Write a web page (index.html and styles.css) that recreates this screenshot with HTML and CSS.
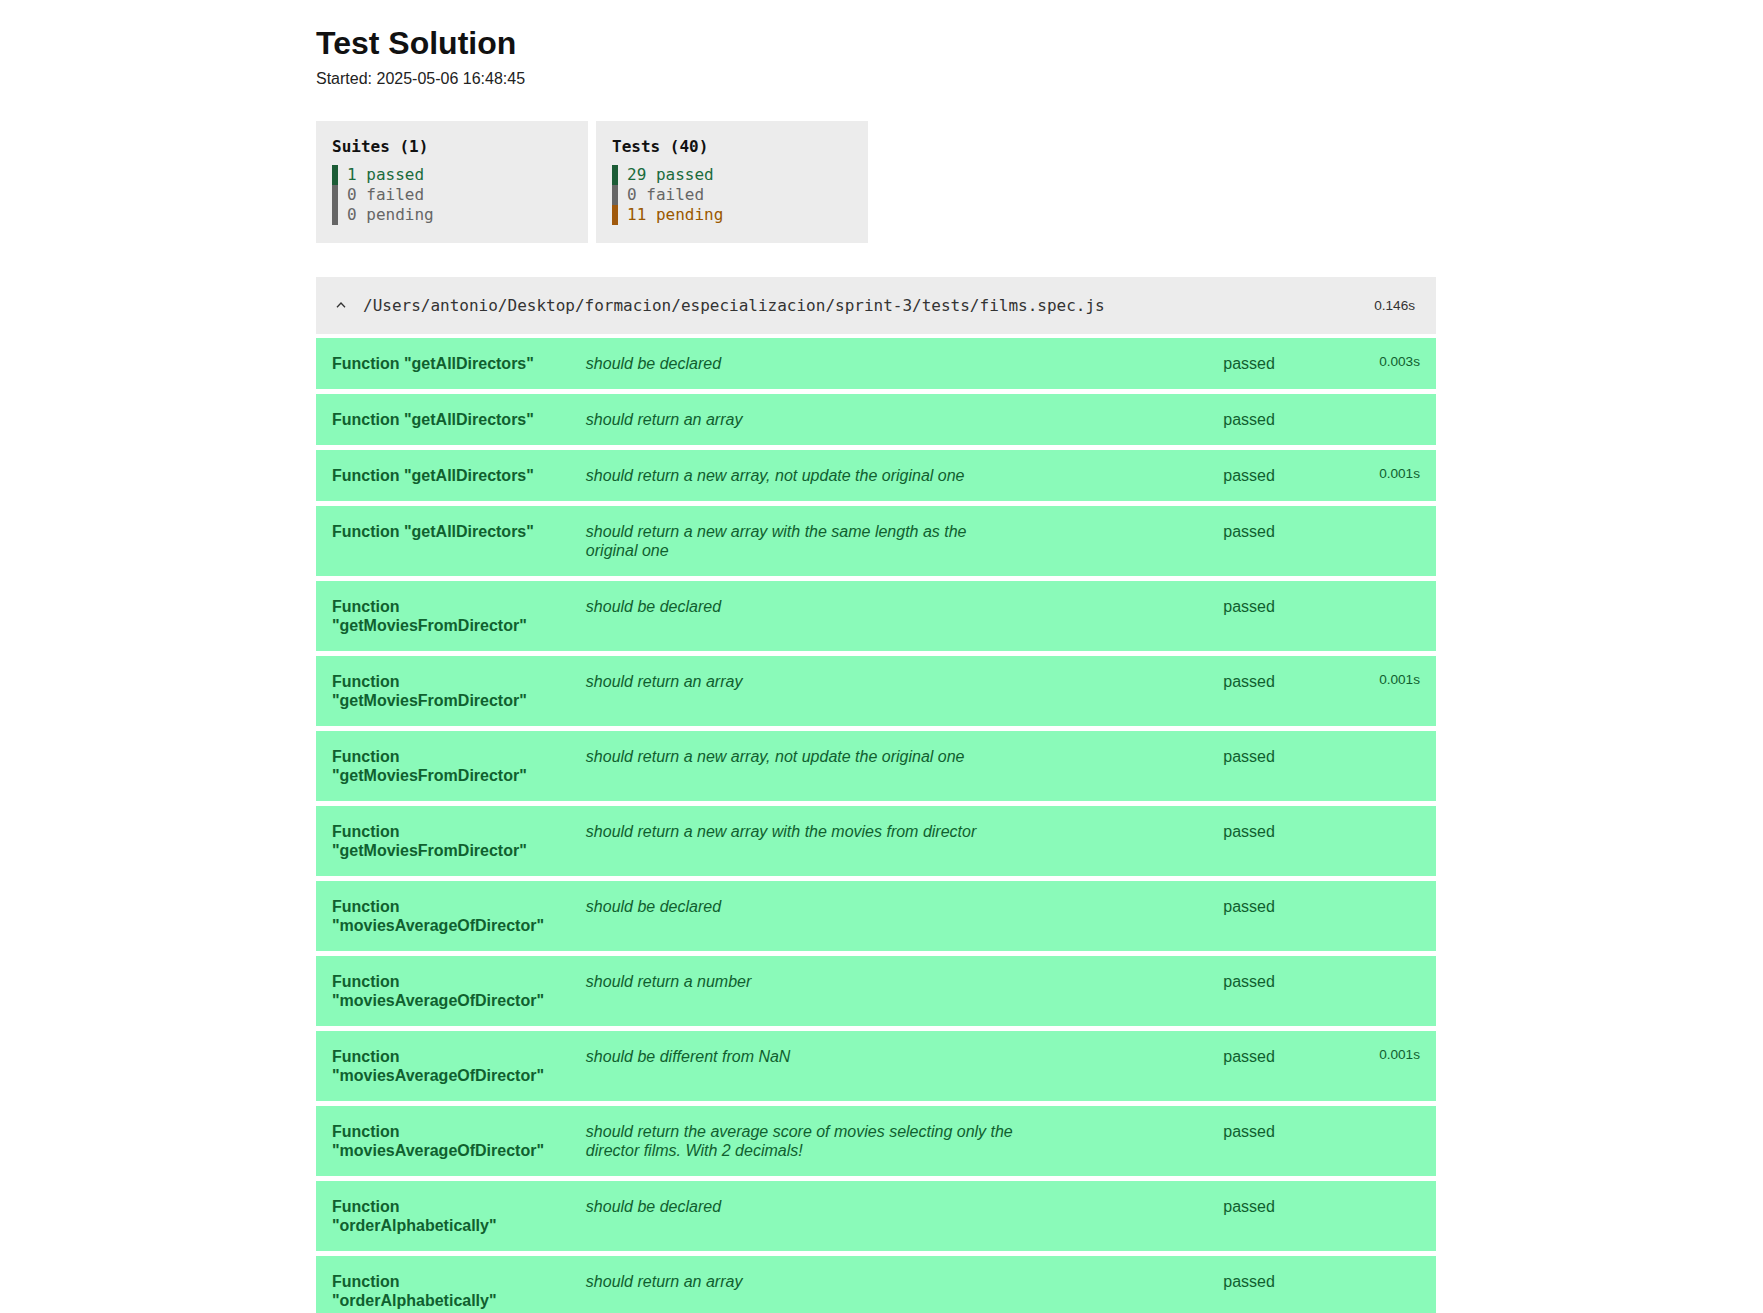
FILE: index.html
```html
<!DOCTYPE html>
<html lang="en">
<head>
<meta charset="utf-8">
<title>Test Solution</title>
<link rel="stylesheet" href="styles.css">
</head>
<body>
<div class="report">
  <header class="report-header">
    <h1 class="title">Test Solution</h1>
    <div class="timestamp">Started: 2025-05-06 16:48:45</div>
  </header>

  <section class="summary">
    <div class="summary-box">
      <div class="summary-total">Suites (1)</div>
      <div class="summary-line passed">1 passed</div>
      <div class="summary-line empty">0 failed</div>
      <div class="summary-line empty">0 pending</div>
    </div>
    <div class="summary-box">
      <div class="summary-total">Tests (40)</div>
      <div class="summary-line passed">29 passed</div>
      <div class="summary-line empty">0 failed</div>
      <div class="summary-line pending">11 pending</div>
    </div>
  </section>

  <section class="suite">
    <div class="suite-info">
      <span class="suite-toggle"><svg width="10" height="6" viewBox="0 0 10 6"><polyline points="1,5.3 5,1 9,5.3" fill="none" stroke="#333" stroke-width="1.3"/></svg></span>
      <span class="suite-path">/Users/antonio/Desktop/formacion/especializacion/sprint-3/tests/films.spec.js</span>
      <span class="suite-time">0.146s</span>
    </div>

    <div class="test-result">
      <div class="test-suitename">Function "getAllDirectors"</div>
      <div class="test-title">should be declared</div>
      <div class="test-status">passed</div>
      <div class="test-duration">0.003s</div>
    </div>
    <div class="test-result">
      <div class="test-suitename">Function "getAllDirectors"</div>
      <div class="test-title">should return an array</div>
      <div class="test-status">passed</div>
      <div class="test-duration"></div>
    </div>
    <div class="test-result">
      <div class="test-suitename">Function "getAllDirectors"</div>
      <div class="test-title">should return a new array, not update the original one</div>
      <div class="test-status">passed</div>
      <div class="test-duration">0.001s</div>
    </div>
    <div class="test-result">
      <div class="test-suitename">Function "getAllDirectors"</div>
      <div class="test-title">should return a new array with the same length as the original one</div>
      <div class="test-status">passed</div>
      <div class="test-duration"></div>
    </div>
    <div class="test-result">
      <div class="test-suitename">Function "getMoviesFromDirector"</div>
      <div class="test-title">should be declared</div>
      <div class="test-status">passed</div>
      <div class="test-duration"></div>
    </div>
    <div class="test-result">
      <div class="test-suitename">Function "getMoviesFromDirector"</div>
      <div class="test-title">should return an array</div>
      <div class="test-status">passed</div>
      <div class="test-duration">0.001s</div>
    </div>
    <div class="test-result">
      <div class="test-suitename">Function "getMoviesFromDirector"</div>
      <div class="test-title">should return a new array, not update the original one</div>
      <div class="test-status">passed</div>
      <div class="test-duration"></div>
    </div>
    <div class="test-result">
      <div class="test-suitename">Function "getMoviesFromDirector"</div>
      <div class="test-title">should return a new array with the movies from director</div>
      <div class="test-status">passed</div>
      <div class="test-duration"></div>
    </div>
    <div class="test-result">
      <div class="test-suitename">Function "moviesAverageOfDirector"</div>
      <div class="test-title">should be declared</div>
      <div class="test-status">passed</div>
      <div class="test-duration"></div>
    </div>
    <div class="test-result">
      <div class="test-suitename">Function "moviesAverageOfDirector"</div>
      <div class="test-title">should return a number</div>
      <div class="test-status">passed</div>
      <div class="test-duration"></div>
    </div>
    <div class="test-result">
      <div class="test-suitename">Function "moviesAverageOfDirector"</div>
      <div class="test-title">should be different from NaN</div>
      <div class="test-status">passed</div>
      <div class="test-duration">0.001s</div>
    </div>
    <div class="test-result">
      <div class="test-suitename">Function "moviesAverageOfDirector"</div>
      <div class="test-title">should return the average score of movies selecting only the director films. With 2 decimals!</div>
      <div class="test-status">passed</div>
      <div class="test-duration"></div>
    </div>
    <div class="test-result">
      <div class="test-suitename">Function "orderAlphabetically"</div>
      <div class="test-title">should be declared</div>
      <div class="test-status">passed</div>
      <div class="test-duration"></div>
    </div>
    <div class="test-result">
      <div class="test-suitename">Function "orderAlphabetically"</div>
      <div class="test-title">should return an array</div>
      <div class="test-status">passed</div>
      <div class="test-duration"></div>
    </div>
    <div class="test-result">
      <div class="test-suitename">Function "orderAlphabetically"</div>
      <div class="test-title">should return a new array, not update the original one</div>
      <div class="test-status">passed</div>
      <div class="test-duration"></div>
    </div>
    <div class="test-result">
      <div class="test-suitename">Function "orderAlphabetically"</div>
      <div class="test-title">should only return the title of the movies, each value must be a string</div>
      <div class="test-status">passed</div>
      <div class="test-duration"></div>
    </div>
  </section>
</div>
</body>
</html>
```

FILE: styles.css
```css
html, body {
  margin: 0;
  padding: 0;
  background: #ffffff;
  color: #333333;
  font-family: "Liberation Sans", Arial, Helvetica, sans-serif;
  font-size: 16px;
}

body {
  padding: 25px 11px 40px 0;
}

.report {
  max-width: 1120px;
  margin: 0 auto;
}

.title {
  margin: 0;
  font-size: 32px;
  font-weight: bold;
  color: #111111;
  line-height: normal;
}

.timestamp {
  margin-top: 8px;
  color: #222222;
  font-size: 16px;
}

/* summary */
.summary {
  display: flex;
  gap: 8px;
  margin: 33px 0 34px;
  font-family: "DejaVu Sans Mono", "Liberation Mono", monospace;
  font-size: 16px;
  line-height: 20px;
  color: #222222;
}

.summary-box {
  background: #ececec;
  padding: 16px 16px 18px;
  min-width: 240px;
}

.summary-total {
  font-weight: bold;
  color: #111111;
  margin-bottom: 8px;
}

.summary-line {
  padding-left: 9px;
  border-left: 6px solid #666666;
}

.summary-line.passed {
  color: #1b6b3c;
  border-left-color: #1c5c36;
}

.summary-line.empty {
  color: #666666;
  border-left-color: #666666;
}

.summary-line.pending {
  color: #9a5800;
  border-left-color: #a0590c;
}

/* suite */
.suite-info {
  display: flex;
  align-items: center;
  background: #ececec;
  padding: 16px;
  margin-bottom: 4px;
  color: #333333;
}

.suite-toggle {
  display: flex;
  align-items: center;
  width: 31px;
  height: 25px;
  padding-bottom: 2px;
  box-sizing: border-box;
}

.suite-toggle svg {
  margin-left: 4px;
  display: block;
}

.suite-path {
  flex-grow: 1;
  font-family: "DejaVu Sans Mono", "Liberation Mono", monospace;
  font-size: 16px;
  color: #333333;
}

.suite-time {
  font-size: 13.6px;
  padding: 3px 5px;
  color: #333333;
}

.test-result {
  display: flex;
  justify-content: space-between;
  padding: 16px;
  margin-bottom: 5px;
  background: #8afab9;
  color: #10602f;
  line-height: 19px;
}

.test-suitename {
  width: 20%;
  font-weight: bold;
  word-break: break-word;
}

.test-title {
  width: 40%;
  font-style: italic;
}

.test-status {
  width: 20%;
  text-align: right;
}

.test-duration {
  width: 10%;
  text-align: right;
  font-size: 13.6px;
  line-height: normal;
}
```
